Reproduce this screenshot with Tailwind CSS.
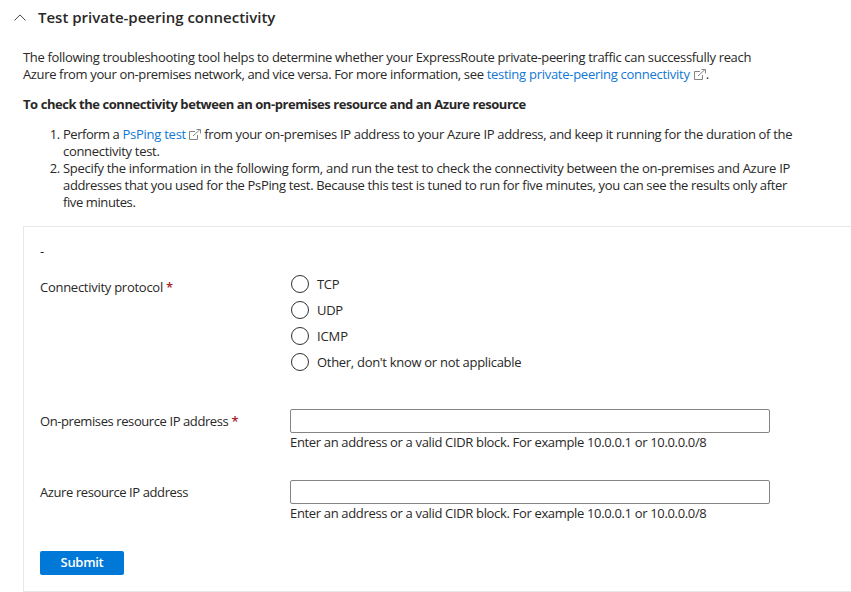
<!DOCTYPE html>
<html lang="en">
<head>
<meta charset="utf-8">
<title>Test private-peering connectivity</title>
<script src="https://cdn.jsdelivr.net/npm/@tailwindcss/browser@4"></script>
</head>
<body class="h-[592px] overflow-hidden bg-white font-['Open_Sans',sans-serif] text-[13px] leading-[17px] tracking-[-0.3px] text-[#292827] whitespace-nowrap">
<header class="flex h-[35px] items-center pl-[14px]">
  <svg class="h-3 w-3" viewBox="0 0 12 12" fill="none" stroke="#444" stroke-width="1"><path d="M.4 8.500 6 2.900l5.600 5.600"/></svg>
  <h1 class="ml-3 text-[15px] font-semibold tracking-[0px]">Test private-peering connectivity</h1>
</header>
<main class="pl-[23px] pt-[14px]">
  <p><span class="tracking-[-0.33px]">The following troubleshooting tool helps to determine whether your ExpressRoute private-peering traffic can successfully reach</span><br><span class="tracking-[-0.36px]">Azure from your on-premises network, and vice versa. For more information, see</span> <a class="tracking-[-0.27px] text-[#0f78d4]">testing private-peering connectivity</a> <svg class="ml-px inline h-[11px] w-3 align-[-1px]" viewBox="0 0 12 11" fill="none" stroke="#858585"><path d="M6 2.500H.5v8h8V6M4 7l7-6.500M7.500.5h4v4"/></svg>.</p>
  <p class="mt-[13px] font-bold tracking-[-0.44px]">To check the connectivity between an on-premises resource and an Azure resource</p>
  <ol class="mt-[13px] list-decimal pl-10">
    <li><span class="tracking-[-0.47px]">Perform a</span> <a class="tracking-[-0.25px] text-[#0f78d4]">PsPing test</a> <svg class="inline h-[11px] w-3 align-[-1px]" viewBox="0 0 12 11" fill="none" stroke="#858585"><path d="M6 2.500H.5v8h8V6M4 7l7-6.500M7.500.5h4v4"/></svg> <span class="tracking-[-0.32px]">from your on-premises IP address to your Azure IP address, and keep it running for the duration of the</span><br>connectivity test.</li>
    <li><span class="tracking-[-0.3px]">Specify the information in the following form, and run the test to check the connectivity between the on-premises and Azure IP</span><br><span class="tracking-[-0.34px]">addresses that you used for the PsPing test. Because this test is tuned to run for five minutes, you can see the results only after</span><br><span class="tracking-[-0.4px]">five minutes.</span></li>
  </ol>
  <form class="mt-[15px] h-[366px] border border-r-0 border-[#e8e8e8] pl-4 pt-4">
    <p>-</p>
    <div class="mt-[11px] grid grid-cols-[250px_1fr]">
      <div class="pt-2"><span class="tracking-[-0.27px]">Connectivity protocol</span> <b class="font-semibold text-[#a4262c]">*</b></div>
      <div class="grid h-[104px] grid-rows-4 items-center">
        <label class="flex items-center gap-2"><i class="ml-px h-[18px] w-[18px] rounded-full border border-[#323130]"></i>TCP</label>
        <label class="flex items-center gap-2"><i class="ml-px h-[18px] w-[18px] rounded-full border border-[#323130]"></i>UDP</label>
        <label class="flex items-center gap-2"><i class="ml-px h-[18px] w-[18px] rounded-full border border-[#323130]"></i><span class="tracking-[-0.1px]">ICMP</span></label>
        <label class="flex items-center gap-2"><i class="ml-px h-[18px] w-[18px] rounded-full border border-[#323130]"></i>Other, don't know or not applicable</label>
      </div>
    </div>
    <div class="mt-[34px] grid h-[71px] grid-cols-[250px_1fr]">
      <div class="pt-1"><span class="tracking-[-0.41px]">On-premises resource IP address</span> <b class="font-semibold text-[#a4262c]">*</b></div>
      <div><div class="h-6 w-[480px] rounded-xs border border-[#858483]"></div><p class="pt-px tracking-[-0.34px]">Enter an address or a valid CIDR block. For example 10.0.0.1 or 10.0.0.0/8</p></div>
    </div>
    <div class="grid h-[71px] grid-cols-[250px_1fr]">
      <div class="pt-1 tracking-[-0.4px]">Azure resource IP address</div>
      <div><div class="h-6 w-[480px] rounded-xs border border-[#858483]"></div><p class="pt-px tracking-[-0.34px]">Enter an address or a valid CIDR block. For example 10.0.0.1 or 10.0.0.0/8</p></div>
    </div>
    <button type="button" class="block h-6 w-[84px] rounded-xs bg-[#0078d7] pb-0.5 font-semibold text-white">Submit</button>
  </form>
</main>
</body>
</html>
